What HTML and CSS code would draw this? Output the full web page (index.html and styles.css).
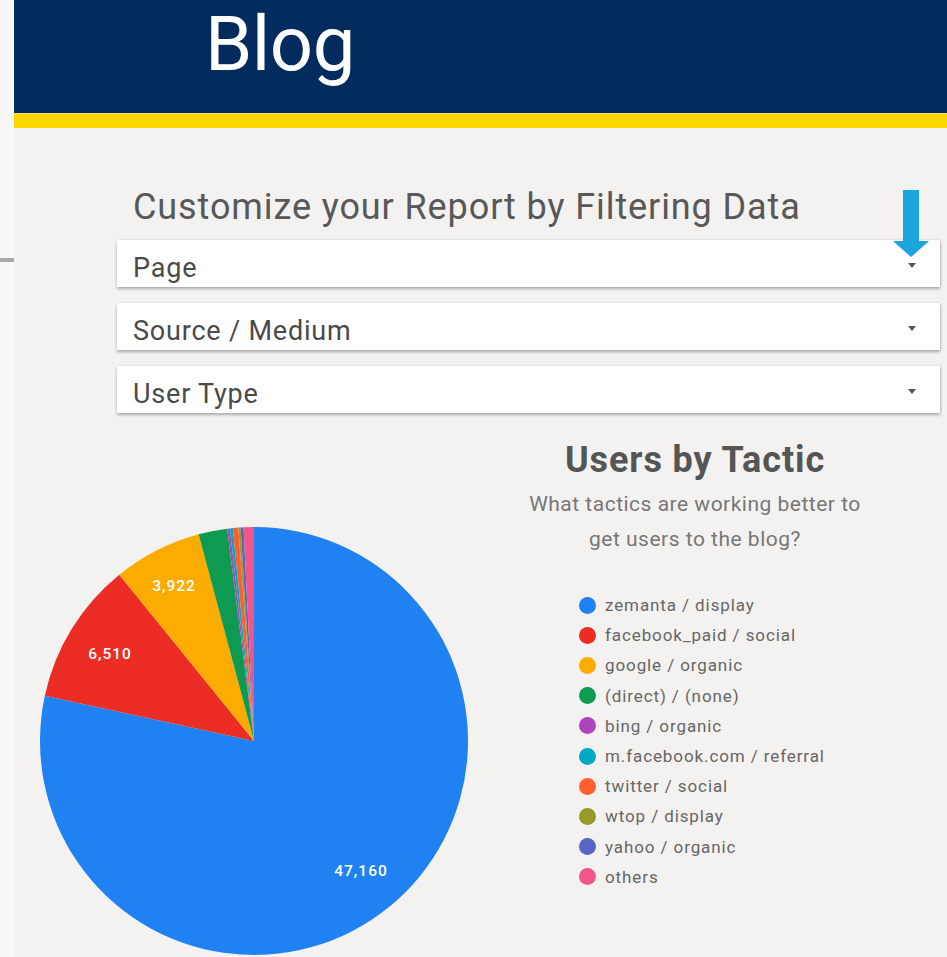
FILE: index.html
```html
<!DOCTYPE html>
<html lang="en">
<head>
<meta charset="utf-8">
<title>Blog Report</title>
<link rel="stylesheet" href="styles.css">
</head>
<body>
<div class="page">
  <aside class="gutter"><span class="gutter-rule"></span></aside>

  <main class="report">
    <header class="banner">
      <h1 class="banner-title">Blog</h1>
    </header>
    <div class="stripe"></div>

    <section class="filters">
      <h2 class="filters-title">Customize your Report by Filtering Data</h2>
      <svg class="hint-arrow" width="36" height="68" viewBox="0 0 36 68" aria-hidden="true">
        <path d="M9 0 H25 V51 H35 L17 67 L-1 51 H9 Z" fill="#1ba5dc"/>
      </svg>
      <div class="select"><span class="select-label">Page</span><span class="caret"></span></div>
      <div class="select"><span class="select-label">Source / Medium</span><span class="caret"></span></div>
      <div class="select"><span class="select-label">User Type</span><span class="caret"></span></div>
    </section>

    <section class="tactic">
      <svg class="pie" width="428" height="428" viewBox="0 0 428 428" aria-label="Users by tactic pie chart">
        <path d="M214 214 L214 0 A214 214 0 1 1 4.84 168.78 Z" fill="#1f81f2"/>
        <path d="M214 214 L4.84 168.78 A214 214 0 0 1 79.33 47.70 Z" fill="#ec2d25"/>
        <path d="M214 214 L79.33 47.70 A214 214 0 0 1 158.61 7.29 Z" fill="#fcab00"/>
        <path d="M214 214 L158.61 7.29 A214 214 0 0 1 187.18 1.69 Z" fill="#0e9a51"/>
        <path d="M214 214 L187.18 1.69 A214 214 0 0 1 189.78 1.38 Z" fill="#ae45bd"/>
        <path d="M214 214 L189.78 1.38 A214 214 0 0 1 192.75 1.06 Z" fill="#00a9c2"/>
        <path d="M214 214 L192.75 1.06 A214 214 0 0 1 198.33 0.58 Z" fill="#ff5f2f"/>
        <path d="M214 214 L198.33 0.58 A214 214 0 0 1 200.56 0.42 Z" fill="#979a27"/>
        <path d="M214 214 L200.56 0.42 A214 214 0 0 1 203.55 0.25 Z" fill="#5865c2"/>
        <path d="M214 214 L203.55 0.25 A214 214 0 0 1 214 0 Z" fill="#f2558a"/>
        <text class="pie-label" x="321" y="344">47,160</text>
        <text class="pie-label" x="70" y="127">6,510</text>
        <text class="pie-label" x="134" y="59">3,922</text>
      </svg>

      <div class="tactic-info">
        <h3 class="tactic-title">Users by Tactic</h3>
        <p class="tactic-sub">What tactics are working better to<br>get users to the blog?</p>
        <ul class="legend">
          <li class="legend-item"><span class="dot dot-blue"></span>zemanta / display</li>
          <li class="legend-item"><span class="dot dot-red"></span>facebook_paid / social</li>
          <li class="legend-item"><span class="dot dot-yellow"></span>google / organic</li>
          <li class="legend-item"><span class="dot dot-green"></span>(direct) / (none)</li>
          <li class="legend-item"><span class="dot dot-purple"></span>bing / organic</li>
          <li class="legend-item"><span class="dot dot-teal"></span>m.facebook.com / referral</li>
          <li class="legend-item"><span class="dot dot-orange"></span>twitter / social</li>
          <li class="legend-item"><span class="dot dot-olive"></span>wtop / display</li>
          <li class="legend-item"><span class="dot dot-indigo"></span>yahoo / organic</li>
          <li class="legend-item"><span class="dot dot-pink"></span>others</li>
        </ul>
      </div>
    </section>
  </main>
</div>
</body>
</html>
```

FILE: styles.css
```css
* { box-sizing: border-box; }

html, body {
  margin: 0;
  padding: 0;
  height: 100%;
  overflow: hidden;
}

body {
  font-family: Roboto, "Liberation Sans", Arial, sans-serif;
  background: #f3f2f0;
}

.page {
  display: flex;
  min-height: 100vh;
}

/* narrow white margin on the left edge */
.gutter {
  flex: 0 0 14px;
  background: #f8f8f8;
  padding-top: 258px;
}

.gutter-rule {
  display: block;
  height: 4px;
  background: #a9a9a9;
}

.report {
  flex: 1;
  background: #f3f2f0;
}

/* header */
.banner {
  height: 113px;
  background: #032b5e;
  padding: 6px 0 0 191px;
}

.banner-title {
  margin: 0;
  font-size: 76px;
  line-height: 76px;
  font-weight: 400;
  color: #ffffff;
  letter-spacing: -0.5px;
}

.stripe {
  height: 15px;
  background: #fed600;
  border-top: 1px solid #f3e27a;
}

/* filters */
.filters {
  position: relative;
  padding: 59px 7px 0 103px;
}

.filters-title {
  margin: 0 0 13px;
  padding-left: 16px;
  font-size: 36px;
  line-height: 40px;
  font-weight: 400;
  letter-spacing: 0.9px;
  color: #585858;
}

.hint-arrow {
  position: absolute;
  left: 880px;
  top: 62px;
  z-index: 2;
}

.select {
  display: flex;
  align-items: center;
  justify-content: space-between;
  height: 47px;
  margin-bottom: 16px;
  padding: 0 24px 0 16px;
  background: #ffffff;
  box-shadow: 0 2px 3px rgba(0, 0, 0, 0.28), 1px 0 2px rgba(0, 0, 0, 0.12);
}

.select:last-child { margin-bottom: 0; }

.select-label {
  font-size: 27px;
  line-height: 37px;
  padding-top: 9px;
  letter-spacing: 0.8px;
  color: #4a4a4a;
}

.caret {
  width: 0;
  height: 0;
  margin-top: 4px;
  border-left: 4.5px solid transparent;
  border-right: 4.5px solid transparent;
  border-top: 5px solid #555555;
}

/* chart */
.tactic {
  display: flex;
  align-items: flex-start;
  padding: 27px 0 0 26px;
}

.pie {
  flex: 0 0 428px;
  margin-top: 87px;
  display: block;
}

.pie-label {
  font-family: Roboto, "Liberation Sans", Arial, sans-serif;
  font-size: 15.5px;
  font-weight: 500;
  letter-spacing: 1px;
  fill: #ffffff;
  text-anchor: middle;
  dominant-baseline: central;
}

.tactic-info {
  flex: 0 0 454px;
  text-align: center;
}

.tactic-title {
  margin: 0;
  font-size: 36px;
  line-height: 40px;
  font-weight: 700;
  letter-spacing: 0.9px;
  color: #555555;
}

.tactic-sub {
  margin: 7px 0 0;
  font-size: 21px;
  line-height: 35px;
  letter-spacing: 0.5px;
  color: #777777;
}

.legend {
  list-style: none;
  margin: 33px 0 0 111px;
  padding: 0;
  text-align: left;
}

.legend-item {
  display: flex;
  align-items: center;
  gap: 9px;
  height: 30.2px;
  font-size: 17px;
  letter-spacing: 0.9px;
  color: #666666;
}

.dot {
  flex: 0 0 17px;
  height: 17px;
  border-radius: 50%;
}

.dot-blue { background: #1f81f2; }
.dot-red { background: #ec2d25; }
.dot-yellow { background: #fcab00; }
.dot-green { background: #0e9a51; }
.dot-purple { background: #ae45bd; }
.dot-teal { background: #00a9c2; }
.dot-orange { background: #ff5f2f; }
.dot-olive { background: #979a27; }
.dot-indigo { background: #5865c2; }
.dot-pink { background: #f2558a; }
```
